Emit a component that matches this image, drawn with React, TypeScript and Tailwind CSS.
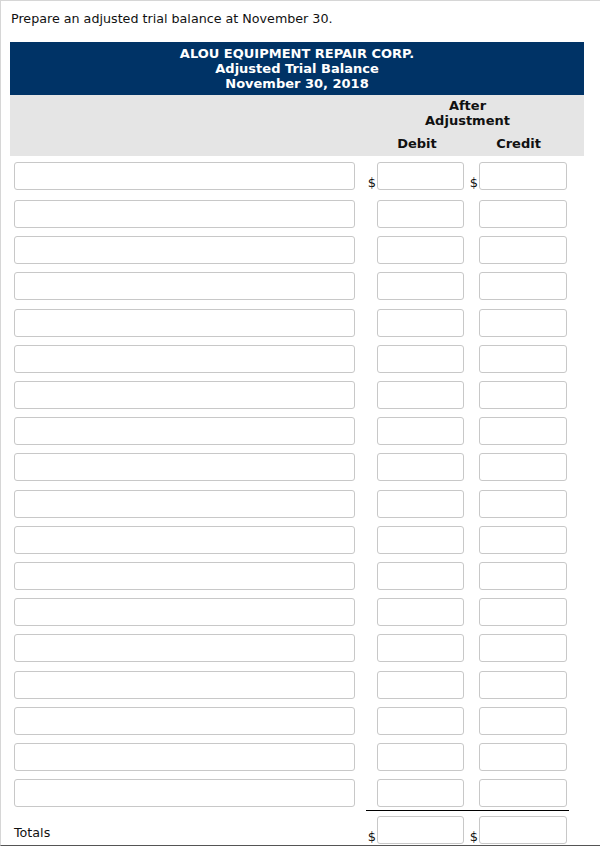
const ROWS = 18;

function MoneyCell({ dollar, wide }: { dollar?: boolean; wide?: boolean }) {
  return (
    <div className="flex items-end">
      <span className="w-[11px] text-right text-[13px] leading-[14px] pr-[1px]">{dollar ? '$' : ''}</span>
      <input
        type="text"
        className={`h-[28px] ${wide ? 'w-[88px]' : 'w-[87px]'} rounded-[3px] border border-[#c8c8c8] bg-white outline-none`}
      />
    </div>
  );
}

function Row({ index }: { index: number }) {
  const first = index === 0;
  const last = index === ROWS - 1;
  const pad = first ? 'pt-[5.5px] pb-[6.5px]' : last ? 'pt-[4.1px] pb-[2.6px]' : 'py-[4.1px]';
  return (
    <div className="flex">
      <div className={`w-[356px] pl-[4px] ${pad}`}>
        <input
          type="text"
          className="block h-[28px] w-[341px] rounded-[3px] border border-[#c8c8c8] bg-white outline-none"
        />
      </div>
      <div className={`flex ${last ? 'border-b border-black' : ''}`}>
        <div className={`w-[102px] ${pad}`}>
          <MoneyCell dollar={first} />
        </div>
        <div className={`w-[101px] ${pad}`}>
          <MoneyCell dollar={first} wide />
        </div>
      </div>
    </div>
  );
}

export default function App() {
  return (
    <div
      className="h-[846px] overflow-hidden border-t border-l border-b border-t-[#d6d6d6] border-l-[#d6d6d6] border-b-[#555] bg-white text-[#111]"
      style={{ fontFamily: '"DejaVu Sans", Verdana, sans-serif' }}
    >
      <p className="pl-[10px] pt-[10px] text-[12.7px] leading-[16px]">Prepare an adjusted trial balance at November 30.</p>

      <div className="ml-[9px] mt-[15px] w-[574px]">
        {/* Title block */}
        <div className="bg-[#003366] pt-[3.5px] pb-[4.5px] text-center text-[13px] font-bold leading-[15px] text-white">
          <div>ALOU EQUIPMENT REPAIR CORP.</div>
          <div>Adjusted Trial Balance</div>
          <div>November 30, 2018</div>
        </div>

        {/* Column headings */}
        <div className="flex h-[61px] bg-[#e5e5e5] text-[13px] font-bold leading-[15px]">
          <div className="w-[356px]" />
          <div className="flex w-[203px] flex-col">
            <div className="pt-[3px] text-center">
              <div>After</div>
              <div>Adjustment</div>
            </div>
            <div className="mt-[8px] flex">
              <div className="w-[102px] text-center">Debit</div>
              <div className="w-[101px] text-center">Credit</div>
            </div>
          </div>
        </div>

        {Array.from({ length: ROWS }).map((_, i) => (
          <Row key={i} index={i} />
        ))}

        {/* Totals */}
        <div className="flex pt-[5px]">
          <div className="flex w-[356px] items-end pl-[4px] pb-[3px] text-[12.7px] leading-[16px]">Totals</div>
          <div className="w-[102px]">
            <MoneyCell dollar />
          </div>
          <div className="w-[101px]">
            <MoneyCell dollar wide />
          </div>
        </div>
      </div>
    </div>
  );
}
